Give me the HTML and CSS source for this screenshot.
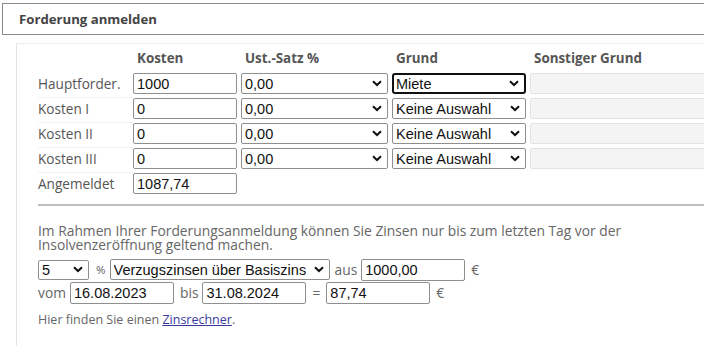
FILE: index.html
```html
<!DOCTYPE html>
<html lang="de">
<head>
<meta charset="utf-8">
<title>Forderung anmelden</title>
<link rel="stylesheet" href="styles.css">
</head>
<body>
<div class="head">Forderung anmelden</div>
<div class="panel">
  <div class="grid">
    <div class="hcell"></div>
    <div class="hcell">Kosten</div>
    <div class="hcell">Ust.-Satz %</div>
    <div class="hcell">Grund</div>
    <div class="hcell">Sonstiger Grund</div>

    <div class="lbl">Hauptforder.</div>
    <div class="cell"><input class="inp" value="1000"></div>
    <div class="cell"><select class="sel"><option>0,00</option></select></div>
    <div class="cell"><select class="sel focus"><option>Miete</option></select></div>
    <div class="cell"><input class="inp dis" disabled></div>

    <div class="lbl">Kosten I</div>
    <div class="cell"><input class="inp" value="0"></div>
    <div class="cell"><select class="sel"><option>0,00</option></select></div>
    <div class="cell"><select class="sel"><option>Keine Auswahl</option></select></div>
    <div class="cell"><input class="inp dis" disabled></div>

    <div class="lbl">Kosten II</div>
    <div class="cell"><input class="inp" value="0"></div>
    <div class="cell"><select class="sel"><option>0,00</option></select></div>
    <div class="cell"><select class="sel"><option>Keine Auswahl</option></select></div>
    <div class="cell"><input class="inp dis" disabled></div>

    <div class="lbl">Kosten III</div>
    <div class="cell"><input class="inp" value="0"></div>
    <div class="cell"><select class="sel"><option>0,00</option></select></div>
    <div class="cell"><select class="sel"><option>Keine Auswahl</option></select></div>
    <div class="cell"><input class="inp dis" disabled></div>

    <div class="lbl last">Angemeldet</div>
    <div class="cell last"><input class="inp" value="1087,74"></div>
  </div>

  <hr class="sep">

  <p class="info">Im Rahmen Ihrer Forderungsanmeldung können Sie Zinsen nur bis zum letzten Tag vor der Insolvenzeröffnung geltend machen.</p>

  <div class="line first">
    <select class="sel w-pct"><option>5</option></select>
    <span class="t pct">%</span>
    <select class="sel w-art"><option>Verzugszinsen über Basiszins</option></select>
    <span class="t">aus</span>
    <input class="inp w-num" value="1000,00">
    <span class="t">€</span>
  </div>
  <div class="line">
    <span class="t">vom</span>
    <input class="inp w-num" value="16.08.2023">
    <span class="t">bis</span>
    <input class="inp w-num" value="31.08.2024">
    <span class="t eq">=</span>
    <input class="inp w-num" value="87,74">
    <span class="t">€</span>
  </div>
  <p class="hint">Hier finden Sie einen <a href="#">Zinsrechner</a>.</p>
</div>
</body>
</html>
```

FILE: styles.css
```css
html, body {
  margin: 0;
  padding: 0;
  background: #fff;
  overflow: hidden;
}
body {
  font-family: "Open Sans", "DejaVu Sans", sans-serif;
  color: #555;
  width: 704px;
  height: 346px;
}
.head {
  margin: 3px 0 0 2px;
  width: 720px;
  border: 1px solid #8a8a8a;
  box-sizing: border-box;
  height: 32px;
  padding-left: 16px;
  font-size: 13.2px;
  font-weight: bold;
  color: #444;
  line-height: 30px;
}
.panel {
  margin: 8px 0 0 16px;
  border-left: 1px solid #e4e4e4;
  border-top: 1px solid #ececec;
  padding: 0 0 0 21px;
  height: 302px;
}
.grid {
  display: grid;
  grid-template-columns: 95px 108px 151px 138px 190px;
  grid-auto-rows: 25px;
  grid-template-rows: 29px;
}
.hcell {
  font-size: 13.4px;
  font-weight: bold;
  color: #555;
  padding-left: 4px;
  line-height: 29px;
}
.lbl {
  font-size: 13.6px;
  color: #555;
  line-height: 22px;
  border-bottom: 1px solid #f2f2f2;
  height: 24px;
}
.cell {
  height: 25px;
}
.lbl.last { border-bottom: 0; }
.inp, .sel {
  font-family: "Liberation Sans", Arial, sans-serif;
  font-size: 14.5px;
  color: #111;
  box-sizing: border-box;
  height: 21px;
  border: 1px solid #8f8f8f;
  border-radius: 2px;
  background: #fff;
  padding: 0 3px;
  margin: 0;
  outline: none;
}
.grid .inp, .grid .sel { width: 104px; display: block; }
.grid .sel { width: 147px; }
.grid .cell:nth-child(5n+4) .sel { width: 134px; }
.sel {
  -webkit-appearance: none;
  appearance: none;
  padding-right: 20px;
  background-image: url("data:image/svg+xml;utf8,<svg xmlns='http://www.w3.org/2000/svg' width='10' height='7' viewBox='0 0 10 7'><path d='M1 1.2 L5 5 L9 1.2' fill='none' stroke='%23111' stroke-width='2'/></svg>");
  background-repeat: no-repeat;
  background-position: right 5px center;
}
.sel.focus {
  border: 2px solid #111;
  border-radius: 3px;
  padding-left: 2px;
}
.inp.dis {
  width: 200px !important;
  background: #f4f4f4;
  border-color: #e2e2e2;
}
.sep {
  margin: 6px 0 0 0;
  border: 0;
  border-top: 2px solid #bdbdbd;
  height: 0;
}
.info {
  margin: 18px 0 0 0;
  font-size: 13.8px;
  line-height: 14px;
  color: #666;
  width: 620px;
}
.line {
  display: flex;
  align-items: center;
  gap: 4px;
  height: 23px;
}
.line.first { margin-top: 6px; }
.t {
  font-size: 13.8px;
  color: #666;
}
.inp + .t { margin-left: 2px; }
.t.pct { font-size: 11.5px; margin-left: 3px; }
.t.eq { margin-right: 2px; }
.w-pct { width: 51px; height: 20px; }
.w-art { width: 220px; margin-right: 1px; }
.w-num { width: 104px; height: 22px; }
.hint {
  margin: 7px 0 0 0;
  font-size: 12.5px;
  color: #666;
}
.hint a { color: #3a3a9e; }
```
